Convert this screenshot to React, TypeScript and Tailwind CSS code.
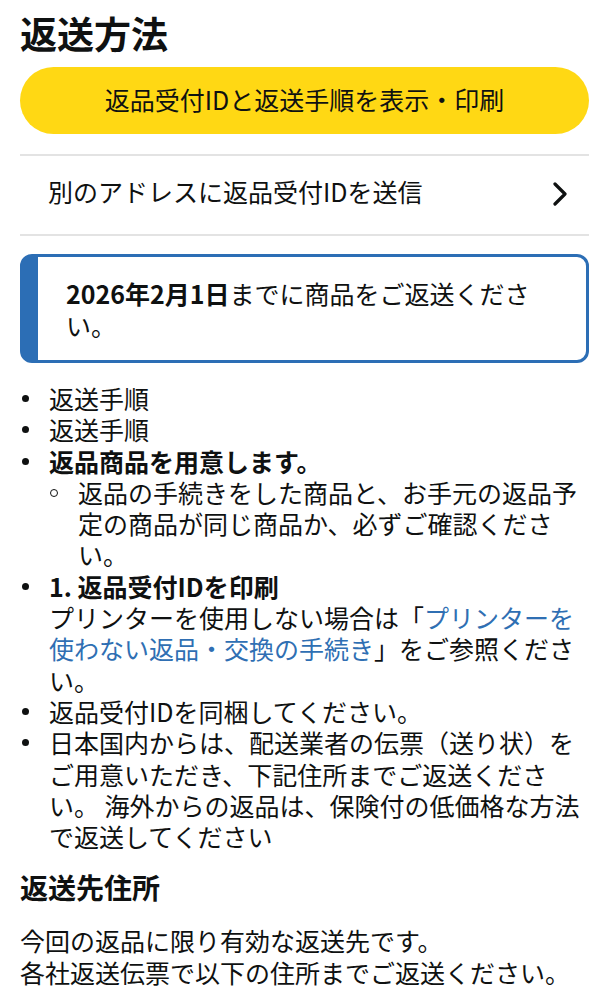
import React from "react";

const Dot = () => (
  <span className="w-[29px] shrink-0 flex items-center h-[31.3px]">
    <span className="ml-[2px] w-[7px] h-[7px] rounded-full bg-[#0f1111]" />
  </span>
);

const Circle = () => (
  <span className="w-[29px] shrink-0 flex items-center h-[31.3px]">
    <span className="ml-[1px] w-[8px] h-[8px] rounded-full border-[1.5px] border-[#0f1111]" />
  </span>
);

export default function App() {
  return (
    <div
      className="bg-white text-[#0f1111] px-5 text-[25px] leading-[31.3px] min-h-[999px]"
      style={{ fontFamily: '"Noto Sans CJK JP", "Noto Sans", sans-serif' }}
    >
      <h1 className="pt-[11px] pb-[2px] text-[37px] leading-[44px] font-bold">返送方法</h1>

      <button className="mt-[10px] w-full h-[67px] rounded-full bg-[#FFD814] text-[25px] text-[#0f1111] flex items-center justify-center pb-[2px]">
        返品受付IDと返送手順を表示・印刷
      </button>

      <div className="mt-[20px] border-t-2 border-b-2 border-[#e3e3e3] h-[82px] flex items-center justify-between pl-[28px] pr-[22px] pb-[7px]">
        <span>別のアドレスに返品受付IDを送信</span>
        <svg width="14" height="24" viewBox="0 0 14 24" fill="none" className="mt-[4px]">
          <polyline points="2,2 12,12 2,22" stroke="#0f1111" strokeWidth="3.2" strokeLinecap="round" strokeLinejoin="round" />
        </svg>
      </div>

      <div className="mt-[18px] border-[3px] border-l-[18px] border-[#2c6eb5] rounded-[12px] pt-[20px] pb-[19px] pl-[28px] pr-[30px] leading-[32px]">
        <span className="font-bold">2026年2月1日</span>までに商品をご返送ください。
      </div>

      <ul className="mt-[20px]">
        <li className="flex"><Dot /><span>返送手順</span></li>
        <li className="flex"><Dot /><span>返送手順</span></li>
        <li className="flex">
          <Dot />
          <div className="flex-1">
            <div className="font-bold">返品商品を用意します。</div>
            <ul>
              <li className="flex">
                <Circle />
                <span>返品の手続きをした商品と、お手元の返品予定の商品が同じ商品か、必ずご確認ください。</span>
              </li>
            </ul>
          </div>
        </li>
        <li className="flex">
          <Dot />
          <div className="flex-1">
            <div className="font-bold">1. 返品受付IDを印刷</div>
            <div>
              プリンターを使用しない場合は「<span className="text-[#2f6fb3]">プリンターを使わない返品・交換の手続き</span>」をご参照ください。
            </div>
          </div>
        </li>
        <li className="flex"><Dot /><span>返品受付IDを同梱してください。</span></li>
        <li className="flex">
          <Dot />
          <span>日本国内からは、配送業者の伝票（送り状）をご用意いただき、下記住所までご返送ください。 海外からの返品は、保険付の低価格な方法で返送してください</span>
        </li>
      </ul>

      <h2 className="mt-[17px] text-[28px] leading-[36px] font-bold">返送先住所</h2>

      <p className="mt-[20px]">
        今回の返品に限り有効な返送先です。
        <br />
        各社返送伝票で以下の住所までご返送ください。
      </p>
    </div>
  );
}
